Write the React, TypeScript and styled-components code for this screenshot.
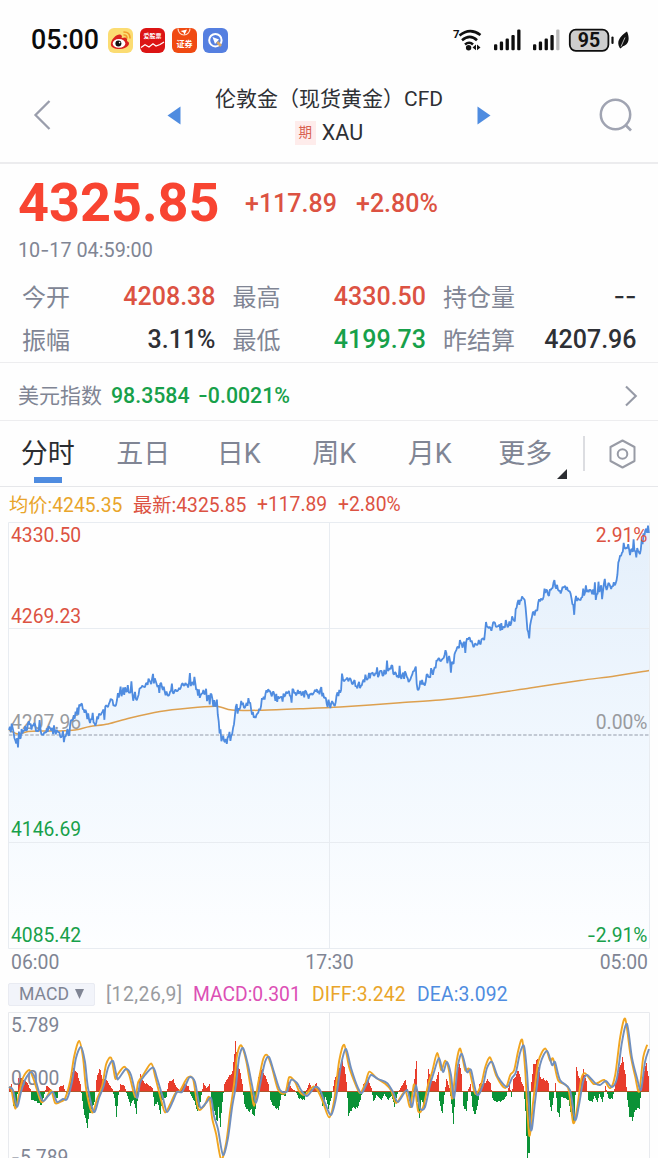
import React from "react";
import styled, { createGlobalStyle } from "styled-components";

const RED = "#dc5242";
const GREEN = "#17a04a";
const GRAY = "#808594";
const BLUE = "#4f8ce0";
const GOLD = "#e9a52a";
const FONT = 'Roboto, "Noto Sans CJK SC", sans-serif';
const DASH_FONT = "Inter, sans-serif";

const Global = createGlobalStyle`
  * { box-sizing: border-box; }
  body { margin: 0; background: #fefefe; overflow: hidden; }
  svg { display: block; flex: none; }
`;

const Screen = styled.main`
  width: 658px;
  height: 1158px;
  overflow: hidden;
  display: flex;
  flex-direction: column;
  background: #fefefe;
  font-family: ${FONT};
  color: #2e3035;
  white-space: nowrap;
  > * { flex: none; }
`;

const Dash = styled.span`
  font-family: ${DASH_FONT};
  line-height: 1;
`;

const StatusBar = styled.div`
  height: 80px;
  padding: 0 29px 0 31px;
  display: flex;
  align-items: center;
  justify-content: space-between;
`;
const Cluster = styled.div<{ $gap: number }>`
  display: flex;
  align-items: center;
  gap: ${(p) => p.$gap}px;
`;
const Clock = styled.span`
  font-size: 26.8px;
  font-weight: 500;
  line-height: 30px;
  color: #0b0b0b;
  width: 70.5px;
`;

const Header = styled.header`
  height: 84px;
  padding: 0 25px 12px 33px;
  border-bottom: 2px solid #ececee;
  display: flex;
  align-items: center;
  justify-content: space-between;
`;
const Switcher = styled.div`
  width: 324px;
  margin-left: 8px;
  display: flex;
  align-items: center;
  justify-content: space-between;
`;
const TitleBlock = styled.div`
  padding-top: 2px;
  display: flex;
  flex-direction: column;
  align-items: center;
`;
const Title = styled.h1`
  margin: 0;
  font-size: 21px;
  font-weight: 400;
  line-height: 33px;
`;
const Symbol = styled.div`
  display: flex;
  align-items: center;
  gap: 6px;
  font-size: 21.5px;
  line-height: 33px;
`;
const FuturesBadge = styled.span`
  width: 21px;
  height: 24px;
  line-height: 23px;
  text-align: center;
  font-size: 13.5px;
  color: #d8604f;
  background: #feeceb;
`;

const Quote = styled.section`
  height: 199px;
  border-bottom: 1px solid #ededef;
`;
const PriceRow = styled.div`
  height: 76px;
  padding: 2px 0 0 18px;
  display: flex;
  align-items: center;
  font-size: 25px;
  font-weight: 500;
  color: ${RED};
`;
const Price = styled.strong`
  width: 227px;
  font-size: 54px;
  font-weight: 700;
  line-height: 60px;
  color: #f84431;
`;
const Change = styled.span<{ $width: number }>`
  width: ${(p) => p.$width}px;
`;
const Timestamp = styled.div`
  padding-left: 18px;
  font-size: 19.8px;
  line-height: 21px;
  height: 22px;
  color: ${GRAY};
`;
const StatGrid = styled.div`
  padding: 13px 22px 0;
  display: grid;
  grid-template-columns: repeat(3, 193.5px);
  grid-auto-rows: 43px;
  column-gap: 17px;
`;
const Stat = styled.div`
  display: flex;
  align-items: center;
  justify-content: space-between;
`;
const StatLabel = styled.span`
  padding-bottom: 3px;
  font-size: 24px;
  color: ${GRAY};
`;
const StatValue = styled.span<{ $color?: string }>`
  font-size: 25px;
  font-weight: 500;
  color: ${(p) => p.$color ?? "#2e3035"};
`;

const IndexRow = styled.section`
  height: 58px;
  padding: 8px 20px 0 18px;
  border-bottom: 1px solid #ededef;
  display: flex;
  align-items: center;
  font-size: 21.3px;
  font-weight: 500;
  color: ${GREEN};
`;
const IndexName = styled.span`
  width: 93px;
  padding-bottom: 3px;
  font-size: 21px;
  font-weight: 400;
  color: ${GRAY};
`;
const IndexPrice = styled.span`
  width: 87px;
`;
const Spacer = styled.span`
  flex: 1;
`;

const TabBar = styled.nav`
  height: 66px;
  border-bottom: 1px solid #e6e7ea;
  display: flex;
  align-items: center;
`;
const Tab = styled.div<{ $active?: boolean }>`
  position: relative;
  width: 95.5px;
  height: 65px;
  line-height: 67px;
  text-align: center;
  font-size: 27px;
  color: ${(p) => (p.$active ? "#2b2d31" : GRAY)};
  &::after {
    content: "";
    display: ${(p) => (p.$active ? "block" : "none")};
    position: absolute;
    left: 34px;
    bottom: 3px;
    width: 28px;
    height: 6px;
    background: ${BLUE};
  }
`;
const MoreCorner = styled.span`
  position: absolute;
  left: 79.5px;
  top: 48px;
  border-left: 10.5px solid transparent;
  border-bottom: 10.5px solid #2b2d31;
`;
const Divider = styled.span`
  width: 1.5px;
  height: 35px;
  margin: 0 24px 0 10px;
  background: #dcdde1;
`;

const Legend = styled.div<{ $height: number }>`
  height: ${(p) => p.$height}px;
  padding-left: 9px;
  display: flex;
  align-items: center;
  font-size: 19.3px;
`;
const LegendItem = styled.span<{ $color: string; $width?: number; $spacing?: number }>`
  color: ${(p) => p.$color};
  letter-spacing: ${(p) => p.$spacing ?? 0}px;
  width: ${(p) => (p.$width ? p.$width + "px" : "auto")};
`;
const TimeAxis = styled.div`
  height: 27px;
  padding: 0 10px 5px 11px;
  display: flex;
  align-items: center;
  justify-content: space-between;
  font-size: 19.4px;
  color: ${GRAY};
`;
const IndicatorButton = styled.div`
  width: 87px;
  height: 23px;
  margin-right: 11px;
  margin-left: -1px;
  border: 1px solid #e9ebf2;
  border-radius: 2px;
  background: #f2f4fa;
  display: flex;
  align-items: center;
  justify-content: center;
  gap: 6px;
  font-size: 17.6px;
  color: ${GRAY};
`;

type Pt = [number, number];

const pairs = (s: string): Pt[] =>
  s.trim().split(/\s+/).map((p) => p.split(",").map(Number) as Pt);

const sample = (pts: Pt[], x: number) => {
  let i = 1;
  while (i < pts.length - 1 && pts[i][0] < x) i++;
  const [x0, y0] = pts[i - 1];
  const [x1, y1] = pts[i];
  const t = Math.min(1, Math.max(0, (x - x0) / (x1 - x0)));
  return y0 + (y1 - y0) * t;
};

const toPath = (pts: Pt[]) =>
  "M" + pts.map(([x, y]) => `${x.toFixed(1)} ${y.toFixed(1)}`).join("L");

const smooth = (pts: Pt[]) => {
  let d = `M${pts[0][0]} ${pts[0][1]}`;
  for (let i = 0; i < pts.length - 1; i++) {
    const a = pts[Math.max(0, i - 1)];
    const b = pts[i];
    const c = pts[i + 1];
    const e = pts[Math.min(pts.length - 1, i + 2)];
    d += `C${b[0] + (c[0] - a[0]) / 7} ${b[1] + (c[1] - a[1]) / 7} ${c[0] - (e[0] - b[0]) / 7} ${c[1] - (e[1] - b[1]) / 7} ${c[0]} ${c[1]}`;
  }
  return d;
};

const trend = pairs(`9,730 11,728 14,733 16,744 18,737 22,733 26,728 32,724 38,729 44,733 50,729 55,734 60,735 66,737
70,727 73,718 76,712 79,707 82,703 85,710 88,716 92,722 94,726 98,718 101,713 105,709 108,703 112,698 115,704 118,697
122,692 128,689 133,693 136,698 140,690 145,685 150,680 154,678 158,683 162,686 166,694 170,690 176,691 182,686 188,684
192,684 196,689 200,696 203,692 207,691 210,695 213,703 217,708 219,727 222,733 226,739 229,737 232,735 234,720 238,710
242,705 246,706 250,707 254,717 257,713 261,704 265,696 269,693 273,694 278,699 283,697 288,691 293,692 298,690 303,693
308,695 313,692 318,691 323,695 327,702 330,706 334,705 338,696 341,685 344,678 348,681 352,683 357,684 361,684 366,679
370,675 375,675 380,673 385,671 391,669 395,674 400,677 405,673 409,681 413,672 416,666 417,692 420,685 425,684 427,676
431,676 434,671 437,659 441,663 446,654 450,660 453,666 456,650 460,641 464,645 469,638 473,646 476,646 480,642 484,638
487,628 491,626 496,625 502,627 508,623 512,620 517,608 520,598 523,595 525,602 528,635 531,618 535,612 539,604 543,600
546,590 550,592 554,584 559,591 564,586 568,588 571,598 573,609 576,597 579,601 584,592 590,591 595,593 600,589 605,588
612,586 617,579 619,560 624,547 628,546 634,549 639,552 642,541 646,527 649,529`);

const priceLine = (() => {
  let seed = 977;
  const rnd = () => {
    seed = (seed * 16807) % 2147483647;
    return seed / 2147483647 - 0.5;
  };
  const out: Pt[] = [];
  for (let x = 9; x <= 649; x += 0.9) {
    const r = rnd();
    const amp = r > 0.36 ? 22 : r > -0.1 ? 10 : 6;
    out.push([x, Math.max(523, sample(trend, x) + rnd() * amp)]);
  }
  return out;
})();

const averageLine = pairs(`9,730 18,734 28,731.5 42,731 60,731 75,730 90,726.5 108,724 130,718 160,711.5 190,708 215,706.3
222,707.5 232,710 260,710.3 300,708.8 340,707 400,702.8 440,700 480,695.5 530,688 580,680.5 615,676 649,670.5`);

const ZERO = 1091.5;

const dea = pairs(`9,1087 13,1090 17,1107 21,1092 25,1080 31,1072 35,1078 39,1092 43,1101 48,1096 53,1092 57,1102 63,1099
67,1099 72,1082 76,1058 81,1047 85,1062 88,1088 94,1112 99,1098 104,1085 108,1068 113,1061 117,1078 119,1078 126,1069
131,1075 137,1098 140,1083 145,1075 153,1067.5 157,1078 163,1098 167,1112 173,1101 177,1092 182,1092 187,1082 190,1077
195,1082 200,1107 206,1103 211,1098 214,1116 218,1129 223,1155 228,1138 232,1108 236,1085 239,1058 243,1048 248,1065
252,1085 256,1103 260,1085 265,1062 269,1057 274,1072 280,1090 287,1091.5 291,1080 297,1083 301,1090 307,1096 315,1087
320,1090 325,1103 331,1115 336,1098 341,1065 346,1049 351,1068 358,1088 362,1093 367,1083 371,1075 378,1079 387,1083
393,1092 398,1102 407,1090 412,1107 416,1085 420,1108 425,1107 430,1085 434,1072 439,1058 443,1072 447,1062 451,1075
454,1098 458,1065 462,1054 467,1072 471,1070 477,1095 483,1085 487,1068 492,1062 498,1077 507,1087 512,1078 516,1072
520,1053 524,1046 527,1072 531,1130 535,1102 540,1065 547,1051 552,1065 555,1062 560,1080 570,1090 575,1120 579,1105
583,1082 587,1075 595,1083 600,1085 606,1081 612,1087 617,1078 622,1042 627,1024 632,1058 637,1078 641,1090 645,1062 649,1049`);

const diff: Pt[] = dea.map(([x, y], i) => [
  Math.max(9, x - 1.8),
  ZERO + (y - ZERO) * 1.1 + (i % 3 === 0 ? 1.6 : i % 3 === 1 ? -1.6 : 0),
]);

const histogram = pairs(`9,4 11,8 12.5,-14 16,-17 18,14 22,13 26,10 30,3 31,-8 35,-9 41,-13 44,-2 46,6 49,4 52,1 54,-5 57,-6
59,5 63,7 66,-4 68,6 71,20 74,25 77,18 80,8 82,-10 85,-28 87,-34 89,-22 92,-15 94,-10 96,12 99,24 102,14 106,12 110,6
112,3 114,-6 116,-24 118,-3 120,8 124,6 127,-4 130,-13 133,-8 136,-21 138,4 140,17 143,10 148,7 152,4 154,-14 157,-10
160,-21 162,-8 166,-5 168,10 173,12 176,5 179,2 184,8 188,6 190,-2 194,-10 197,-19 200,-10 203,9 206,4 209,8 211,-8
214,-20 217,-30 218,-15 220,-35 222,-10 224,8 228,15 232,20 235,50 237,26 240,20 242,8 244,-13 248,-19 251,-18 254,-25
256,-8 258,15 261,23 264,18 268,8 270,-8 273,-14 278,-18 281,-3 285,-4 288,10 291,4 295,1 298,-6 304,-8 306,2 309,9
312,3 316,9 319,2 322,-13 325,-5 328,-16 331,-6 334,12 338,22 342,30 344,25 346,10 348,-23 352,-16 357,-16 360,-8 363,8
368,12 371,4 373,-10 376,-3 381,-8 384,-2 388,-8 391,-4 394,-14 397,-2 401,6 405,12 407,3 410,-16 412,-3 414,12 416,33
417,-10 419,-28 421,-8 424,-15 426,2 428,22 431,12 435,10 438,20 439,-10 442,-22 444,-3 446,14 449,4 451,-12 453,-32
455,3 457,20 459,30 461,17 463,-14 466,-20 468,3 470,8 472,-16 475,-23 478,-8 479,8 484,9 487,12 490,9 492,-6 495,-10
502,-9 506,-4 509,8 511,-5 513,12 518,22 521,10 523,6 525,-20 527,-66 529,-62 531,10 533,27 537,32 540,14 545,12 548,10
549,-8 551,-20 553,-6 555,9 557,-20 559,-25 561,-5 568,-8 571,-25 574,-30 576,24 580,10 583,22 586,10 588,-8 592,-10
594,-4 597,-10 599,-2 602,-10 605,6 608,-6 612,-7 615,8 618,20 622,34 625,18 627,-8 629,-24 632,-28 635,-18 639,-16
641,4 643,20 646,28 649,10`);

const bars = (sign: 1 | -1) => {
  let d = "";
  for (let x = 9; x < 649; x++) {
    const h = Math.round(sample(histogram, x) * (1 + 0.06 * Math.sin(x * 1.9)));
    if (h * sign > 0) d += `M${x} 1092h1v${-h}h-1z`;
  }
  return d;
};

type ChartTextProps = { x: number; y: number; fill: string; end?: boolean; minus?: boolean; children: string };
const ChartText = ({ x, y, fill, end, minus, children }: ChartTextProps) => (
  <text x={x} y={y} fill={fill} fontFamily={FONT} fontSize={19.3} textAnchor={end ? "end" : "start"}>
    {minus && <tspan fontFamily={DASH_FONT}>-</tspan>}
    {children}
  </text>
);

const PriceChart = () => (
  <svg width="658" height="430" viewBox="0 521 658 430">
    <defs>
      <linearGradient id="area" gradientUnits="userSpaceOnUse" x1="0" y1="522" x2="0" y2="948">
        <stop offset="0" stopColor="#e4effb" />
        <stop offset="0.5" stopColor="#f0f7fe" />
        <stop offset="1" stopColor="#fdfeff" />
      </linearGradient>
    </defs>
    <path d={toPath(priceLine) + "L649 948L9 948Z"} fill="url(#area)" />
    <path d="M8.5 522.5H649.5V948.5H8.5ZM8.5 628.5H649.5M8.5 842.5H649.5M329.5 522V948" fill="none" stroke="#e8ecf1" strokeWidth="1" />
    <path d="M9 735H649" stroke="#b3bbc6" strokeWidth="1.4" strokeDasharray="3.5 1.8" />
    <ChartText x={11} y={729} fill="#999b9f">4207.96</ChartText>
    <path d={smooth(averageLine)} fill="none" stroke="#dda04f" strokeWidth="1.5" />
    <path d={toPath(priceLine)} fill="none" stroke={BLUE} strokeWidth="1.8" strokeLinejoin="bevel" />
    <ChartText x={11} y={542} fill={RED}>4330.50</ChartText>
    <ChartText x={11} y={622.5} fill={RED}>4269.23</ChartText>
    <ChartText x={11} y={835.7} fill={GREEN}>4146.69</ChartText>
    <ChartText x={11} y={942} fill={GREEN}>4085.42</ChartText>
    <ChartText x={647.5} y={542} fill={RED} end>2.91%</ChartText>
    <ChartText x={647.5} y={729} fill="#999b9f" end>0.00%</ChartText>
    <ChartText x={647.5} y={942} fill={GREEN} end minus>2.91%</ChartText>
  </svg>
);

const MacdChart = () => (
  <svg width="658" height="148" viewBox="0 1010 658 148">
    <path d="M8.5 1160V1012.5H649.5V1160M329.5 1012V1160" fill="none" stroke="#e8eaee" />
    <g shapeRendering="crispEdges">
      <path d={bars(1)} fill="#e83d2c" />
      <path d={bars(-1)} fill="#0b9237" />
    </g>
    <path d="M9 1091.5H649" stroke="#b0562b" strokeWidth="1" />
    <ChartText x={11} y={1032} fill={GRAY}>5.789</ChartText>
    <ChartText x={11} y={1085} fill={GRAY}>0.000</ChartText>
    <ChartText x={11} y={1164} fill={GRAY} minus>5.789</ChartText>
    <path d={smooth(diff)} fill="none" stroke="#f1a51f" strokeWidth="1.9" />
    <path d={smooth(dea)} fill="none" stroke="#708fbe" strokeWidth="1.9" />
  </svg>
);

const WeiboIcon = () => (
  <svg width="25" height="25" viewBox="0 0 25 25">
    <rect width="25" height="25" rx="6" fill="#fbdc72" />
    <path d="M3 15C4 10 10 5 13 7C15 8 13 10 14 10C17 9 20 9 19 13C24 15 19 21 12 21C6 21 2 19 3 15Z" fill="#d9211f" />
    <ellipse cx="11" cy="15.4" rx="6.3" ry="4.4" fill="#fff" />
    <circle cx="10.4" cy="15.6" r="3" fill="#111" />
    <circle cx="11.6" cy="14.6" r=".8" fill="#fff" />
    <path d="M16 7Q19 7 19 10M16 4Q22 4 22 10" fill="none" stroke="#f29b2c" strokeWidth="1.6" strokeLinecap="round" />
  </svg>
);
const StockIcon = () => (
  <svg width="25" height="25" viewBox="0 0 25 25">
    <rect width="25" height="25" rx="6" fill="#dc1414" />
    <text x="12.5" y="10.3" textAnchor="middle" fontFamily={FONT} fontWeight="700" fontSize="6" fill="#fff">爱股票</text>
    <path d="M1 19.5L5 16.8L9 19L13 15.8L16 18L20 16.5L24 14" fill="none" stroke="#fff" strokeWidth="1.3" />
  </svg>
);
const SecuritiesIcon = () => (
  <svg width="25" height="25" viewBox="0 0 25 25">
    <rect width="25" height="25" rx="6" fill="#f04a12" />
    <path d="M6 0.5A6 6.5 0 0 0 18 0.5" fill="none" stroke="#ffd9c8" strokeWidth="1.2" />
    <path d="M8.5 3L15 1.5L12.5 7L11.5 4.5Z" fill="#fff" />
    <text x="12.5" y="19" textAnchor="middle" fontFamily={FONT} fontWeight="700" fontSize="8" fill="#fff">证券</text>
  </svg>
);
const BrowserIcon = () => (
  <svg width="25" height="25" viewBox="0 0 25 25">
    <rect width="25" height="25" rx="6" fill="#557fe0" />
    <circle cx="12.4" cy="12.2" r="6.2" fill="none" stroke="#fff" strokeWidth="2" />
    <path d="M9.5 9L16 11.5L12 16Z" fill="#fff" />
    <path d="M14.2 14L18 18" stroke="#d9a968" strokeWidth="2.6" />
  </svg>
);
const WifiIcon = () => (
  <svg width="30" height="26" viewBox="0 0 30 26">
    <text x="1" y="10.5" fontFamily={FONT} fontWeight="700" fontSize="11.5" fill="#111">7</text>
    <path d="M7.5 8.5Q18 0 28.5 8M10 13.2Q18 6.5 25 13.2M13 17.5Q17.3 14 21 17.5" fill="none" stroke="#111" strokeWidth="2.6" />
    <circle cx="16.6" cy="20.7" r="2.7" fill="#111" />
    <path d="M24 17.5L20.5 20.4L24 23.3ZM25 17.5L28.5 20.4L25 23.3Z" fill="#111" />
  </svg>
);
const SignalIcon = ({ faded }: { faded?: boolean }) => (
  <svg width="27" height="22" viewBox="0 0 27 22">
    {[6, 8.7, 11.7, 15.3, 20.7].map((h, i) => (
      <rect key={i} x={i * 5.8} y={21.3 - h} width="3.3" height={h} rx="1.1" fill={faded && i === 4 ? "#b9b9b9" : "#0e0e0e"} />
    ))}
  </svg>
);
const BatteryIcon = () => (
  <svg width="61" height="25" viewBox="0 0 61 25">
    <rect x="1.8" y="1.6" width="38.6" height="21.2" rx="6" fill="#cdcdcd" stroke="#0e0e0e" strokeWidth="1.8" />
    <text x="21" y="19" textAnchor="middle" fontFamily={FONT} fontWeight="700" fontSize="19.5" fill="#111">95</text>
    <path d="M44.5 9.5V15" stroke="#0e0e0e" strokeWidth="2.2" strokeLinecap="round" />
    <path d="M59 3.5C62 10 61 16.5 55 18.2L52.5 20.5L51.5 19.5C47.5 12.5 54 7 59 3.5Z" fill="#111" />
    <path d="M53 18.5L57 9.5" stroke="#fff" strokeWidth=".7" />
  </svg>
);

export default function App() {
  return (
    <Screen>
      <Global />
      <StatusBar>
        <Cluster $gap={6.7}>
          <Clock>05:00</Clock>
          <WeiboIcon />
          <StockIcon />
          <SecuritiesIcon />
          <BrowserIcon />
        </Cluster>
        <Cluster $gap={8}>
          <Cluster $gap={12}>
            <WifiIcon />
            <SignalIcon />
            <SignalIcon faded />
          </Cluster>
          <BatteryIcon />
        </Cluster>
      </StatusBar>

      <Header>
        <svg width="18" height="32" viewBox="0 0 18 32">
          <path d="M16.5 2L2.5 16L16.5 30" fill="none" stroke="#9a9eac" strokeWidth="2.3" />
        </svg>
        <Switcher>
          <svg width="14" height="19" viewBox="0 0 14 19"><path d="M13.5 .5V18.5L.5 9.5Z" fill={BLUE} /></svg>
          <TitleBlock>
            <Title>伦敦金（现货黄金）CFD</Title>
            <Symbol><FuturesBadge>期</FuturesBadge>XAU</Symbol>
          </TitleBlock>
          <svg width="14" height="19" viewBox="0 0 14 19"><path d="M.5 .5V18.5L13.5 9.5Z" fill={BLUE} /></svg>
        </Switcher>
        <svg width="34" height="34" viewBox="0 0 34 34">
          <circle cx="16.5" cy="16.5" r="14.7" fill="none" stroke="#a0a4b2" strokeWidth="2.5" />
          <path d="M26.5 27L32 32.5" stroke="#a0a4b2" strokeWidth="2.7" />
        </svg>
      </Header>

      <Quote>
        <PriceRow>
          <Price>4325.85</Price>
          <Change $width={111}>+117.89</Change>
          <Change $width={90}>+2.80%</Change>
        </PriceRow>
        <Timestamp>10<Dash>-</Dash>17 04:59:00</Timestamp>
        <StatGrid>
          <Stat><StatLabel>今开</StatLabel><StatValue $color={RED}>4208.38</StatValue></Stat>
          <Stat><StatLabel>最高</StatLabel><StatValue $color={RED}>4330.50</StatValue></Stat>
          <Stat><StatLabel>持仓量</StatLabel><StatValue><Dash>--</Dash></StatValue></Stat>
          <Stat><StatLabel>振幅</StatLabel><StatValue>3.11%</StatValue></Stat>
          <Stat><StatLabel>最低</StatLabel><StatValue $color={GREEN}>4199.73</StatValue></Stat>
          <Stat><StatLabel>昨结算</StatLabel><StatValue>4207.96</StatValue></Stat>
        </StatGrid>
      </Quote>

      <IndexRow>
        <IndexName>美元指数</IndexName>
        <IndexPrice>98.3584</IndexPrice>
        <span><Dash>-</Dash>0.0021%</span>
        <Spacer />
        <svg width="14" height="22" viewBox="0 0 14 22">
          <path d="M2 1.5L11.8 11L2 20.5" fill="none" stroke="#969aa6" strokeWidth="2.1" />
        </svg>
      </IndexRow>

      <TabBar>
        <Tab $active>分时</Tab>
        <Tab>五日</Tab>
        <Tab>日K</Tab>
        <Tab>周K</Tab>
        <Tab>月K</Tab>
        <Tab>更多<MoreCorner /></Tab>
        <Divider />
        <svg width="27" height="30" viewBox="0 0 27 30">
          <path d="M13.5 1.5L25.5 8V22L13.5 28.5L1.5 22V8Z" fill="none" stroke="#989ba5" strokeWidth="2" strokeLinejoin="round" />
          <circle cx="13.5" cy="15" r="4.8" fill="none" stroke="#989ba5" strokeWidth="2" />
        </svg>
      </TabBar>

      <Legend $height={34}>
        <LegendItem $color={GOLD} $width={124}>均价:4245.35</LegendItem>
        <LegendItem $color={RED} $width={124}>最新:4325.85</LegendItem>
        <LegendItem $color={RED} $width={81}>+117.89</LegendItem>
        <LegendItem $color={RED}>+2.80%</LegendItem>
      </Legend>
      <PriceChart />
      <TimeAxis><span>06:00</span><span>17:30</span><span>05:00</span></TimeAxis>
      <Legend $height={32}>
        <IndicatorButton>
          MACD
          <svg width="9" height="10" viewBox="0 0 9 10"><path d="M0 0H9L4.5 10Z" fill={GRAY} /></svg>
        </IndicatorButton>
        <LegendItem $color="#999b9f" $width={87} $spacing={0.5}>[12,26,9]</LegendItem>
        <LegendItem $color="#dc4fb5" $width={119}>MACD:0.301</LegendItem>
        <LegendItem $color={GOLD} $width={105} $spacing={0.15}>DIFF:3.242</LegendItem>
        <LegendItem $color={BLUE} $spacing={0.15}>DEA:3.092</LegendItem>
      </Legend>
      <MacdChart />
    </Screen>
  );
}
